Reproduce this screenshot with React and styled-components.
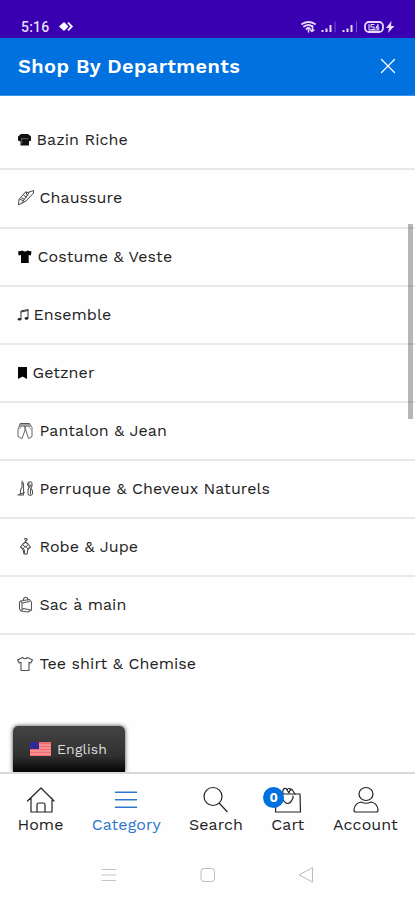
import React from 'react'
import styled, { createGlobalStyle } from 'styled-components'

const GlobalStyle = createGlobalStyle`
* {
    box-sizing: border-box;
}
body {
    margin: 0;
    background: white;
    font-family: "Work Sans", Inter, "Liberation Sans", sans-serif;
}
`
const PageWrapper = styled.div`
display: flex;
flex-direction: column;
height: 900px;
overflow: hidden;
position: relative;
color: #222;
background: #fefefe;
`
const StatusBar = styled.div`
display: flex;
justify-content: space-between;
height: 38px;
padding: 16px 19px 0 21px;
background: #3900b1;
color: #e6dcfa;
`
const StatusGroup = styled.div`
display: flex;
align-items: center;
height: 21px;
`
const Clock = styled.span`
font-family: Roboto, sans-serif;
font-size: 14px;
font-weight: 500;
letter-spacing: 0.2px;
margin-right: 10px;
`
const Header = styled.header`
display: flex;
justify-content: space-between;
align-items: center;
height: 58px;
padding: 0 19px 1px 18px;
background: #0071df;
border-bottom: 1px solid #3b94e8;
color: white;
`
const Title = styled.h1`
margin: 0;
font-size: 20px;
font-weight: 600;
letter-spacing: 0.41px;
`
const DepartmentList = styled.ul`
flex: 1;
margin: 0;
padding: 16.3px 0 0;
list-style: none;
`
const Department = styled.li`
display: flex;
align-items: center;
height: 58.12px;
padding-left: 17px;
border-bottom: 2px solid #e8e8e8;
&:last-child {
    border-bottom: 0;
}
`
const IconSlot = styled.span`
display: flex;
width: ${props => props.$width}px;
height: 20px;
align-items: center;
`
const DepartmentName = styled.span`
font-size: 16px;
line-height: 20px;
white-space: nowrap;
letter-spacing: 0.07px;
`
const ScrollThumb = styled.div`
position: absolute;
top: 224px;
right: 2px;
width: 5px;
height: 195px;
background: rgba(0, 0, 0, .28);
`
const Language = styled.div`
display: flex;
align-items: center;
width: 112px;
height: 46px;
margin-left: 13px;
padding-left: 17px;
border-radius: 5px 5px 0 0;
background: linear-gradient(#444 0%, #303030 65%, #080808 96%);
box-shadow: 0 0 4px rgba(0, 0, 0, .75);
color: #ddd;
`
const LanguageName = styled.span`
margin-left: 6px;
font-size: 14px;
letter-spacing: 0.15px;
`
const TabBar = styled.nav`
position: relative;
display: flex;
justify-content: space-between;
height: 78px;
padding: 10px 17px 0 18px;
border-top: 2px solid #d9d9d9;
background: #fefefe;
`
const Tab = styled.div`
position: relative;
display: flex;
flex-direction: column;
align-items: center;
width: ${props => props.$width}px;
color: ${props => props.$active ? '#2d76cc' : '#222'};
svg {
    height: 32px;
    margin-bottom: -1px;
}
`
const TabName = styled.span`
font-size: 16px;
line-height: 20px;
white-space: nowrap;
letter-spacing: 0.07px;
`
const Badge = styled.span`
position: absolute;
top: 3px;
left: -8px;
width: 21px;
height: 21px;
border-radius: 50%;
background: #0070df;
color: white;
font-size: 13px;
font-weight: 700;
line-height: 21px;
text-align: center;
`
const SystemBar = styled.div`
display: flex;
justify-content: space-between;
align-items: center;
height: 50px;
padding: 0 101px;
`

const line = {
    fill: 'none',
    stroke: 'currentColor',
    strokeLinecap: 'round',
    strokeLinejoin: 'round'
}

const SmallIcon = ({ children, width = 16 }) => (
    <svg width={width} height="18" viewBox={`0 0 ${width} 18`} {...line}>{children}</svg>
)

const icons = {
    bazin: <SmallIcon><path d="M4 3H11L14 5.5V9.5L12 10.5V14.5H3.5V10.5L1 9.5V5.5Z" fill="#111" stroke="none" /><path d="M4.5 7.7H11M4.7 8V12" stroke="#888" strokeWidth=".7" /></SmallIcon>,
    shoe: <SmallIcon width={18}><path d="M1.5 15.5L2 10.5L8.5 3L11 3.5L16.5 1.5V4L9 12L2 15.7M3 10.5L6.5 11.5L12 4M5 9L7 10M7 6.5L9 8M6.5 11.5L5 14M9 3L10 6" stroke="#444" /></SmallIcon>,
    vest: <SmallIcon><path d="M1 3.5L5.5 2.5Q8 4.5 10.5 2.5L14.5 3.5L13.8 7.5L11.7 7V15H4V7L1.7 7.5Z" fill="#050505" stroke="none" /></SmallIcon>,
    music: <SmallIcon width={14}><path d="M4 13V5L11 3.5V12M4 6L11 4.5" strokeWidth="1" stroke="#333" /><ellipse cx="2.5" cy="13.2" rx="1.8" ry="1.3" fill="#222" stroke="none" /><ellipse cx="9.5" cy="12.4" rx="1.8" ry="1.3" fill="#222" stroke="none" /></SmallIcon>,
    bookmark: <SmallIcon width={12}><path d="M1 3H10V15L5.5 12.5L1 15Z" fill="#050505" stroke="none" /></SmallIcon>,
    trousers: <SmallIcon><path d="M3.5 1.5H12.5L15 5.5V14.5L11.5 16.5L8.5 7L5 16.5L1 14.5V8Z" stroke="#666" /><path d="M3.5 2H12.5M3 4H13M8 4V7" stroke="#444" strokeWidth="1.2" /><path d="M4 5Q3.5 7 2.5 7M12 5Q13 7 14 7" stroke="#777" strokeWidth=".7" /></SmallIcon>,
    hair: <SmallIcon width={17}><path d="M5 1V7L3.5 10V15H1M5 2Q7 3 6.5 6V15H3.5M2 14.5L7.5 12.5M11 3Q13 .5 15 3V6L14 8L15.5 11V14Q13 17 11 14V10L12 7L10.5 5ZM12 3V6M14 5L12 8M13.5 9V14" stroke="#555" strokeWidth="1.05" /></SmallIcon>,
    dress: <SmallIcon width={18}><path d="M8.5 4V2.5Q10.5 2.5 10 1Q8.5 0 7.5 1M8.5 4L11 6L13.5 9L11 11L10 16H7L6 11L3.5 9L6 6Z" stroke="#444" strokeWidth="1.1" /><path d="M6 7L8.5 9L11 7M6 11L8.5 8L11 11M7.5 12V15" stroke="#555" /></SmallIcon>,
    bag: <SmallIcon><path d="M3.5 5L12.5 3.5L14.5 6V14L11 16L4 15L2.5 13V6ZM3.5 5L5 7V13M5 7L12.5 5.5M6 4.5L7 2Q9 .5 10.5 2L11 4M4 15L6.5 12.5L13.5 14" stroke="#555" strokeWidth="1.05" /></SmallIcon>,
    shirt: <SmallIcon><path d="M5.5 2.5Q8 5 10.5 2.5L15.5 5L13.8 8L12 7.3V15.5H4V7.3L2.2 8L.5 5Z" stroke="#555" strokeWidth="1.15" /></SmallIcon>
}

const departments = [
    { name: 'Bazin Riche', icon: 'bazin', slot: 19.5 },
    { name: 'Chaussure', icon: 'shoe', slot: 22.5 },
    { name: 'Costume & Veste', icon: 'vest', slot: 20.5 },
    { name: 'Ensemble', icon: 'music', slot: 16.5 },
    { name: 'Getzner', icon: 'bookmark', slot: 15.5 },
    { name: 'Pantalon & Jean', icon: 'trousers', slot: 22.5 },
    { name: 'Perruque & Cheveux Naturels', icon: 'hair', slot: 22.5 },
    { name: 'Robe & Jupe', icon: 'dress', slot: 22.5 },
    { name: 'Sac à main', icon: 'bag', slot: 22.5 },
    { name: 'Tee shirt & Chemise', icon: 'shirt', slot: 22.5 }
]

const tabs = [
    {
        name: 'Home', width: 45,
        icon: <><path d="M2.5 17L16 4L29 17M6 14V28H27V14M12 28V20.5Q12 19 14 19H18Q20 19 20 20.5V28" /></>
    },
    {
        name: 'Category', width: 69, active: true,
        icon: <path d="M5.5 8.3H26.5M5.5 15.8H26.5M5.5 23.3H26.5" strokeWidth="1.5" />
    },
    {
        name: 'Search', width: 53,
        icon: <><circle cx="13" cy="12.5" r="9" /><path d="M19.5 19.5L27 27.5" /></>
    },
    {
        name: 'Cart', width: 33, badge: '0',
        icon: <><path d="M4 10H28L28.5 28H3.5Z" /><path d="M10 10V14Q16 25 21 14V12M11 10Q10 4 14 4.5L17 9Q18 4 20 5.5L23 10M15 6Q17 2.5 19 6" /></>
    },
    {
        name: 'Account', width: 65,
        icon: <><ellipse cx="16" cy="10" rx="7" ry="6.5" /><path d="M6 28Q3.5 28 4 25.5Q5 19 11 18Q16 20.5 21 18Q27 19 28 25.5Q28.5 28 26 28Z" /></>
    }
]

const StatusIcons = () => (
    <svg width="96" height="16" viewBox="0 0 96 16" {...line}>
        <path d="M2 5Q8.5 1 15 5M4 7.5Q8.5 4.5 12.5 7.5M6.5 10Q8.5 8 10 10" strokeWidth="1.8" />
        <path d="M8.5 11V13M12.5 7V12M10.5 11L12 12.5L14 11" strokeWidth="1.5" />
        <path d="M22.5 13V11M26.5 13V9.5M30.5 13V6M43.5 13V11M47.5 13V9.5M51.5 13V6" strokeWidth="2" strokeLinecap="butt" />
        <path d="M35 13V3M56.5 13V3" stroke="#7655c6" strokeWidth="1" />
        <rect x="65" y="3" width="18" height="10" rx="4" strokeWidth="1.8" />
        <path d="M69 5.5V10.5M71 10.5H74V8H71V5.5H74M78 5.5L76 9H79M78 5.5V11M69 11H79" strokeWidth="1.1" />
        <path d="M91.5 2L86 9H89L88 14L94.5 7H91Z" fill="currentColor" stroke="none" />
    </svg>
)

const Flag = () => (
    <svg width="21" height="14" viewBox="0 0 21 14">
        <rect width="21" height="14" fill="#ef6c72" />
        <path d="M0 3H21M0 6H21M0 9H21M0 12H21" stroke="#ffb0ae" strokeWidth="1" />
        <rect width="9" height="7" fill="#302a99" />
    </svg>
)

const App = () => (
    <PageWrapper>
        <GlobalStyle />
        <StatusBar>
            <StatusGroup>
                <Clock>5:16</Clock>
                <svg width="15" height="12" viewBox="0 0 15 12">
                    <path d="M5 1L9.5 5.5L5 10L0 5.5Z" fill="#fff" />
                    <path d="M9 1.7L12.8 5.5L9 9.3" fill="none" stroke="#fff" strokeWidth="1.8" />
                </svg>
            </StatusGroup>
            <StatusGroup><StatusIcons /></StatusGroup>
        </StatusBar>
        <Header>
            <Title>Shop By Departments</Title>
            <svg width="16" height="16" viewBox="0 0 16 16" {...line}><path d="M1.5 1.5L14.5 14.5M14.5 1.5L1.5 14.5" strokeWidth="1.3" /></svg>
        </Header>
        <DepartmentList>
            {departments.map(item => (
                <Department key={item.name}>
                    <IconSlot $width={item.slot}>{icons[item.icon]}</IconSlot>
                    <DepartmentName>{item.name}</DepartmentName>
                </Department>
            ))}
        </DepartmentList>
        <ScrollThumb />
        <Language>
            <Flag />
            <LanguageName>English</LanguageName>
        </Language>
        <TabBar>
            {tabs.map(tab => (
                <Tab key={tab.name} $width={tab.width} $active={tab.active}>
                    <svg width="32" height="32" viewBox="0 0 32 32" {...line} strokeWidth="1.2">{tab.icon}</svg>
                    {tab.badge && <Badge>{tab.badge}</Badge>}
                    <TabName>{tab.name}</TabName>
                </Tab>
            ))}
        </TabBar>
        <SystemBar>
            <svg width="16" height="16" viewBox="0 0 16 16" {...line} stroke="#c4c4c4"><path d="M1 2.5H15M1 8H15M1 13.5H15" /></svg>
            <svg width="16" height="16" viewBox="0 0 16 16" {...line} stroke="#bbb"><rect x="1" y="1.5" width="13.5" height="13" rx="3" /></svg>
            <svg width="16" height="16" viewBox="0 0 16 16" {...line} stroke="#bbb"><path d="M14.5 1V15L1.5 8Z" /></svg>
        </SystemBar>
    </PageWrapper>
)

export default App
